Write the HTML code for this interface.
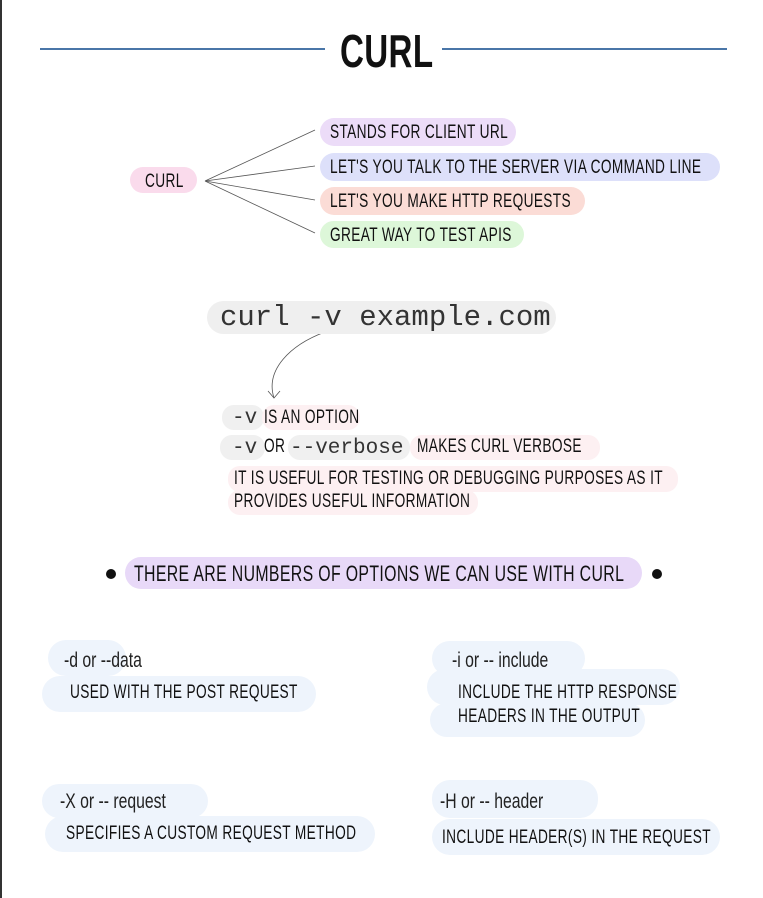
<!DOCTYPE html>
<html><head><meta charset="utf-8"><style>
body{margin:0;width:763px;height:898px;background:#fff;position:relative;overflow:hidden;font-family:"Liberation Sans",sans-serif;color:#111}
.a{position:absolute;box-sizing:border-box}
.p{position:absolute;border-radius:14px}
.t{position:absolute;white-space:nowrap;font-size:19px;transform:scaleX(.72);transform-origin:0 50%;line-height:1;letter-spacing:.5px}
.m{position:absolute;white-space:nowrap;font-family:"Liberation Mono",monospace;color:#333;line-height:1}
.s{position:absolute;white-space:nowrap;font-size:21px;transform:scaleX(.75);transform-origin:0 50%;line-height:1;color:#222}
</style></head><body>
<div class="a" style="left:0;top:0;width:2px;height:898px;background:#333"></div>
<div class="a" style="left:40px;top:48px;width:285px;height:2px;background:#4a76a8"></div>
<div class="a" style="left:442px;top:48px;width:285px;height:2px;background:#4a76a8"></div>
<div class="t" style="left:340px;top:28px;font-size:46px;transform:scaleX(.72);font-weight:bold">CURL</div>

<svg class="a" style="left:0;top:0" width="763" height="898">
<g stroke="#555" stroke-width="0.8" fill="none">
<line x1="205" y1="181" x2="315" y2="130"/><line x1="205" y1="181" x2="315" y2="166"/>
<line x1="205" y1="181" x2="315" y2="200"/><line x1="205" y1="181" x2="315" y2="233"/>
<path d="M325 332 C290 345 265 370 274 398"/><path d="M268 391 L274 398 L280 391"/>
</g>
<circle cx="111" cy="574" r="5" fill="#111"/><circle cx="657" cy="574" r="5" fill="#111"/>
</svg>

<div class="p" style="left:130px;top:167px;width:67px;height:26px;background:#fadbec"></div>
<div class="t" style="left:145px;top:172px">CURL</div>
<div class="p" style="left:320px;top:118px;width:196px;height:28px;background:#ecdcf8"></div>
<div class="t" style="left:330px;top:123px">STANDS FOR CLIENT URL</div>
<div class="p" style="left:320px;top:153px;width:400px;height:28px;background:#dde0fa"></div>
<div class="t" style="left:330px;top:158px">LET'S YOU TALK TO THE SERVER VIA COMMAND LINE</div>
<div class="p" style="left:320px;top:187px;width:265px;height:28px;background:#fbdcd6"></div>
<div class="t" style="left:330px;top:192px">LET'S YOU MAKE HTTP REQUESTS</div>
<div class="p" style="left:320px;top:221px;width:204px;height:27px;background:#ddf7d9"></div>
<div class="t" style="left:330px;top:226px">GREAT WAY TO TEST APIS</div>

<div class="p" style="left:207px;top:301px;width:349px;height:33px;background:#efefef;border-radius:17px"></div>
<div class="m" style="left:220px;top:303px;font-size:29px">curl -v example.com</div>

<div class="p" style="left:222px;top:405px;width:42px;height:25px;background:#f0f0f0;border-radius:12px"></div>
<div class="p" style="left:262px;top:405px;width:98px;height:25px;background:#fdf0f2;border-radius:12px"></div>
<div class="m" style="left:232px;top:408px;font-size:21px">-v</div>
<div class="t" style="left:264px;top:408px">IS AN OPTION</div>
<div class="p" style="left:220px;top:435px;width:45px;height:25px;background:#f0f0f0;border-radius:12px"></div>
<div class="p" style="left:288px;top:435px;width:122px;height:25px;background:#f0f0f0;border-radius:12px"></div>
<div class="p" style="left:410px;top:435px;width:190px;height:25px;background:#fdf0f2;border-radius:12px"></div>
<div class="m" style="left:232px;top:438px;font-size:21px">-v</div>
<div class="t" style="left:264px;top:437px">OR</div>
<div class="m" style="left:290px;top:438px;font-size:21px">--verbose</div>
<div class="t" style="left:417px;top:437px">MAKES CURL VERBOSE</div>
<div class="p" style="left:228px;top:466px;width:450px;height:26px;background:#fdf0f2;border-radius:12px"></div>
<div class="p" style="left:228px;top:490px;width:250px;height:25px;background:#fdf0f2;border-radius:12px"></div>
<div class="t" style="left:234px;top:469px">IT IS USEFUL FOR TESTING OR DEBUGGING PURPOSES AS IT</div>
<div class="t" style="left:234px;top:492px">PROVIDES USEFUL INFORMATION</div>

<div class="p" style="left:125px;top:557px;width:517px;height:32px;background:#e8d9f8;border-radius:16px"></div>
<div class="t" style="left:134px;top:563px;font-size:22px">THERE ARE NUMBERS OF OPTIONS WE CAN USE WITH CURL</div>

<div class="p" style="left:48px;top:640px;width:78px;height:36px;background:#eef4fc;border-radius:18px"></div>
<div class="p" style="left:42px;top:676px;width:274px;height:36px;background:#eef4fc;border-radius:18px"></div>
<div class="s" style="left:64px;top:650px">-d or --data</div>
<div class="t" style="left:70px;top:683px">USED WITH THE POST REQUEST</div>

<div class="p" style="left:432px;top:641px;width:153px;height:35px;background:#eef4fc;border-radius:18px"></div>
<div class="p" style="left:427px;top:669px;width:253px;height:36px;background:#eef4fc;border-radius:18px"></div>
<div class="p" style="left:430px;top:703px;width:215px;height:34px;background:#eef4fc;border-radius:18px"></div>
<div class="s" style="left:452px;top:650px">-i or -- include</div>
<div class="t" style="left:458px;top:683px">INCLUDE THE HTTP RESPONSE</div>
<div class="t" style="left:458px;top:707px">HEADERS IN THE OUTPUT</div>

<div class="p" style="left:42px;top:784px;width:166px;height:34px;background:#eef4fc;border-radius:18px"></div>
<div class="p" style="left:45px;top:816px;width:330px;height:36px;background:#eef4fc;border-radius:18px"></div>
<div class="s" style="left:60px;top:791px">-X or -- request</div>
<div class="t" style="left:66px;top:824px">SPECIFIES A CUSTOM REQUEST METHOD</div>

<div class="p" style="left:432px;top:780px;width:166px;height:38px;background:#eef4fc;border-radius:18px"></div>
<div class="p" style="left:432px;top:819px;width:288px;height:36px;background:#eef4fc;border-radius:18px"></div>
<div class="s" style="left:440px;top:791px">-H or -- header</div>
<div class="t" style="left:442px;top:828px">INCLUDE HEADER(S) IN THE REQUEST</div>
</body></html>
